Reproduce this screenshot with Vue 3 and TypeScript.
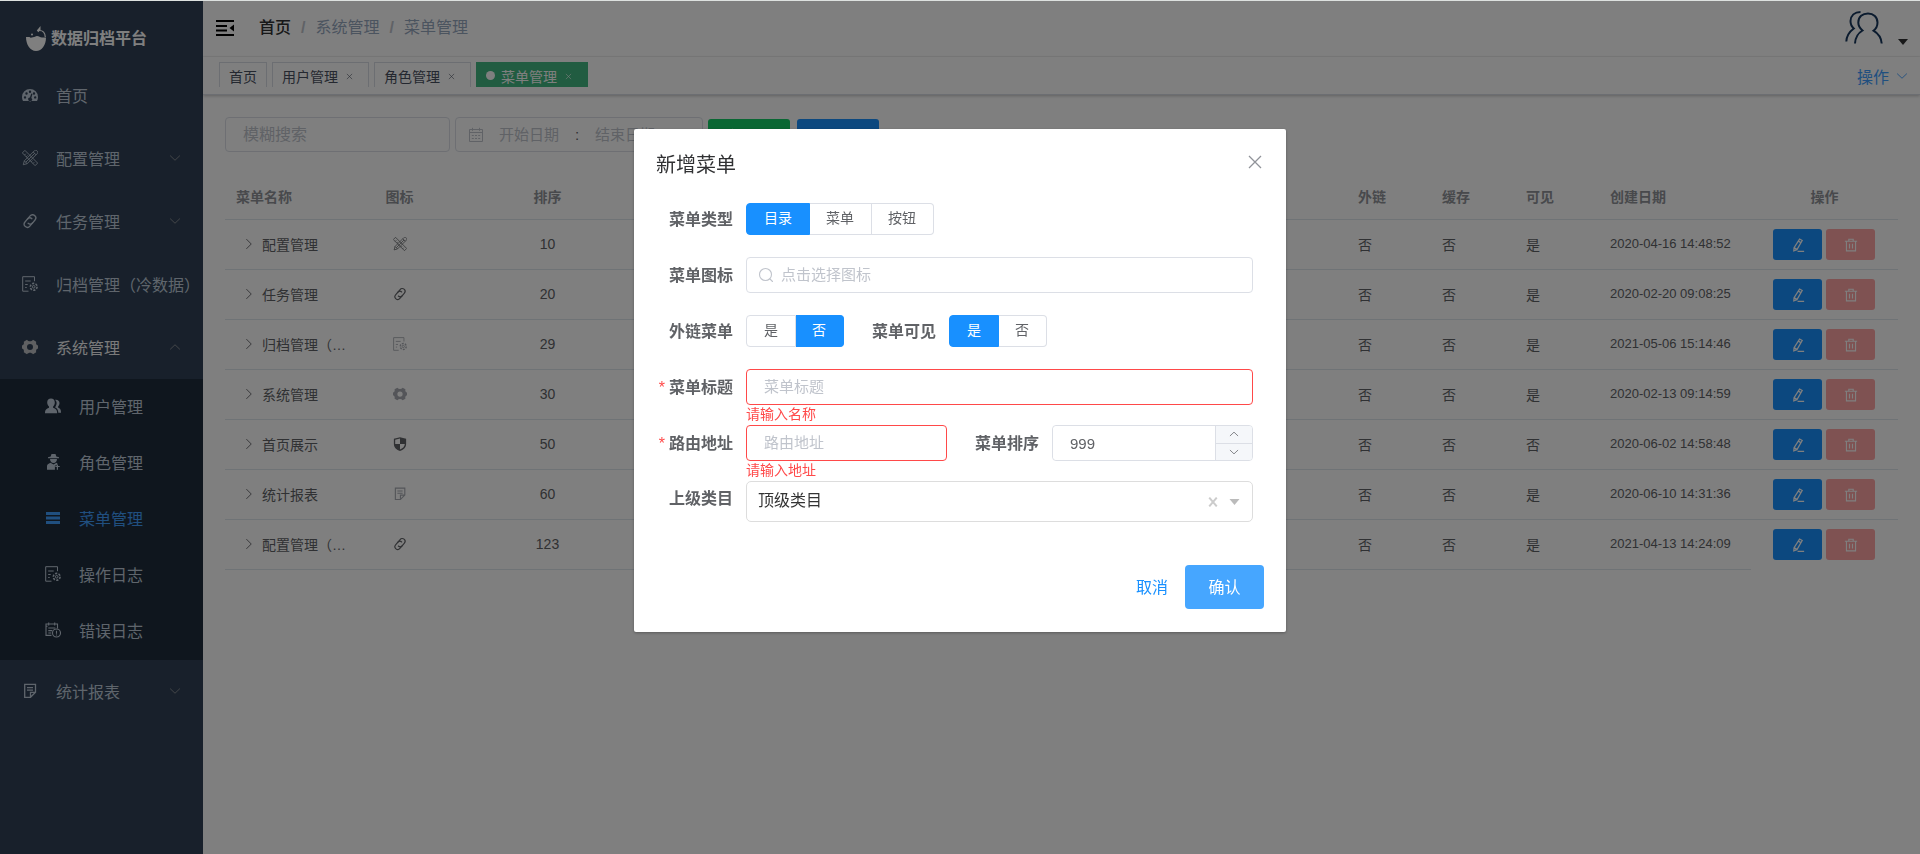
<script setup lang="ts">
import { ref, defineComponent, h } from 'vue'

const paths: Record<string, string> = {
  dashboard:
    '<path fill="currentColor" fill-rule="evenodd" d="M8 2a8 8 0 0 0-8 8c0 1.500.4 2.900 1 4h14c.6-1.100 1-2.500 1-4a8 8 0 0 0-8-8zM3 9.200a1.200 1.200 0 1 1 0 2.400 1.200 1.200 0 0 1 0-2.400zM4.500 5.300a1.200 1.200 0 1 1 0 2.400 1.200 1.200 0 0 1 0-2.400zM8 3.600A1.200 1.200 0 1 1 8 6a1.200 1.200 0 0 1 0-2.400zM9.300 6.500l1.200.4-1.200 4a1.900 1.900 0 1 1-1.400-.4zM12 5.300a1.200 1.200 0 1 1 0 2.400 1.200 1.200 0 0 1 0-2.400zM13.200 9.200a1.200 1.200 0 1 1 0 2.400 1.200 1.200 0 0 1 0-2.400z"/>',
  tools:
    '<g fill="none" stroke="currentColor" stroke-width=".8" stroke-linejoin="round"><path transform="rotate(-45 8 8)" d="M6.200-1h3.600v18H6.200zM6.200 2h1.800M6.200 4.500h1.800M6.200 11.500h1.800M6.200 14h1.800"/><path transform="rotate(45 8 8)" d="M6-.5c0-2 4-2 4 0v14.500l-2 3.500-2-3.500zM6 1.500h4M8 1.500v12.500M6 14h4"/></g>',
  link:
    '<g fill="none" stroke="currentColor" stroke-width="1.300" stroke-linecap="round" transform="rotate(40 8 8)"><path d="M4.800 8.500V4a3.200 3.200 0 0 1 6.400 0v4A3.200 3.200 0 0 1 8 11"/><path d="M11.200 7.500V12a3.200 3.200 0 0 1-6.400 0V8A3.200 3.200 0 0 1 8 5"/></g>',
  docgear:
    '<g fill="none" stroke="currentColor"><path stroke-width="1" d="M6.500 15.200H.7V.7h11.800v4.500M3.200 5h5.500M3.200 8.500h2.500M3.200 11.500h1.500"/><circle cx="11.700" cy="10.800" r="3.400" stroke-width="1.600" stroke-dasharray="2.200 1.300"/><circle cx="11.700" cy="10.800" r="1.300"/></g>',
  gear:
    '<path fill="currentColor" fill-rule="evenodd" d="M5 .8c.8 1 1.800 1.500 3 1.500s2.200-.5 3-1.500l3.200 1.900c-.5 2.100.2 3.200 1.800 3.800v3c-1.600.6-2.300 1.700-1.800 3.800L11 15.200c-.8-1-1.800-1.500-3-1.500s-2.200.5-3 1.500l-3.200-1.900c.5-2.100-.2-3.200-1.800-3.800v-3c1.600-.6 2.300-1.700 1.800-3.800zM8 5a3 3 0 1 0 0 6 3 3 0 0 0 0-6z"/>',
  peoples:
    '<g fill="currentColor"><path d="M6 0.600c2.300 0 3.800 1.600 3.800 3.900 0 1.700-.7 3.100-1.700 4v1.200c2.600.9 4 2.100 4 4.700v.9H0v-.9c0-2.600 1.500-3.800 4-4.700V8.500c-1-.9-1.800-2.300-1.800-4C2.200 2.200 3.700.6 6 .6z"/><path d="M10 1.800c2.600-.4 4.500.9 4.500 3.200 0 1.500-.6 2.600-1.400 3.500v1c2 .8 3 2.200 2.900 5.200h-2.700c0-2.700-1-4.300-3.200-5.300.8-1.200 1.500-2.600 1.500-4.300 0-1.400-.6-2.500-1.600-3.300z"/></g>',
  role:
    '<g fill="currentColor"><path d="M6.500 0h4l.8 2.400 2.700.9v.9H3v-.9l2.700-.9z"/><path d="M5 5h7c0 2.300-1.300 4-3.500 4S5 7.300 5 5z"/><path d="M5.500 8.800l3 1.600 3-1.600 1 .6-1 2.100h-1.600V15.800H2v-3.600c0-1.600 1.300-2.600 3.500-3.400z"/><path d="M11.800 10.500h1.200v1.400h1.700v1.100H13v2.700h-1.200V13h-1.500v-1.100h1.500z"/></g>',
  menu: '<path fill="currentColor" d="M1 2h14v3H1zM1 6.500h14v3H1zM1 11h14v3H1z"/>',
  errorlog:
    '<g fill="none" stroke="currentColor" stroke-width="1.100"><path d="M6.500 13.400H1V2h11.500v4.500M3.700.5v3M9.700.5v3M3.300 6h7M3.300 8.600h4M3.300 11h3M1 4.200h1.500"/><circle cx="11.500" cy="11" r="4"/><path d="M11.500 8.700v3M11.500 12.400v1.100"/></g>',
  report:
    '<g fill="none" stroke="currentColor" stroke-width="1.300"><path d="M8.500 14.300H2.700V1.300h10.800v8zM8.500 14.300v-5h5M5 4.600h6M5 7.200h6"/></g>',
  shield:
    '<path fill="currentColor" fill-rule="evenodd" d="M8 .3l7 1.700v6c0 4.200-3.200 6.700-7 7.900C4.200 14.700 1 12.200 1 8V2zM8 1.800L2.500 3.100V8H8zM8 8v6.300c3-1.100 5.300-3.200 5.500-6.300z"/>',
  calendar:
    '<g fill="none" stroke="currentColor"><path d="M1.500 2.500h13v12h-13zM1.500 5.500h13M4.500.8v3M11.500.8v3M3.800 8.500h2M7 8.500h2M10.200 8.500h2M3.800 11.500h2M7 11.500h2M10.200 11.500h2"/></g>',
  search:
    '<g fill="none" stroke="currentColor" stroke-width="1.100" stroke-linecap="round"><circle cx="7.500" cy="7.500" r="6"/><path d="M12 12l2.500 2.500"/></g>',
  plus: '<path fill="none" stroke="currentColor" stroke-width="1.200" d="M8 1.500v13M1.500 8h13"/>',
  close: '<path fill="none" stroke="currentColor" stroke-width="1.300" d="M2 2l12 12M14 2L2 14"/>',
  clear: '<path fill="none" stroke="currentColor" stroke-width="3.200" d="M2 1l12 14M14 1L2 15"/>',
  down: '<path fill="none" stroke="currentColor" stroke-width="1.200" d="M1.500 4.800L8 11l6.500-6.200"/>',
  up: '<path fill="none" stroke="currentColor" stroke-width="1.200" d="M1.500 11.200L8 5l6.500 6.200"/>',
  right: '<path fill="none" stroke="currentColor" stroke-width="1.200" d="M4.500 1.500L11 8l-6.500 6.500"/>',
  edit:
    '<path fill="none" stroke="currentColor" stroke-width="1.400" d="M9.800 1.200l3 1.600-6 10.500-3.600 1.300.3-3.600zM8.400 3.600l3 1.700M3.500 11l3.200 2M7.500 15.200H15"/>',
  trash:
    '<path fill="none" stroke="currentColor" stroke-width="1.300" d="M1 3.700h14M5.500 3.500V1.400h5v2.100M2.800 3.700v11h10.400v-11M6.300 6.500v5.500M9.700 6.500v5.500"/>',
}

const Icon = defineComponent({
  props: { name: { type: String, required: true } },
  setup: (p) => () => h('svg', { viewBox: '0 0 16 16', 'aria-hidden': 'true', innerHTML: paths[p.name] }),
})

interface NavItem { label: string; icon: string; arrow?: 'down' | 'up'; active?: boolean }
const topNav: NavItem[] = [
  { label: '首页', icon: 'dashboard' },
  { label: '配置管理', icon: 'tools', arrow: 'down' },
  { label: '任务管理', icon: 'link', arrow: 'down' },
  { label: '归档管理（冷数据）', icon: 'docgear' },
  { label: '系统管理', icon: 'gear', arrow: 'up', active: true },
]
const subNav: NavItem[] = [
  { label: '用户管理', icon: 'peoples' },
  { label: '角色管理', icon: 'role' },
  { label: '菜单管理', icon: 'menu', active: true },
  { label: '操作日志', icon: 'docgear' },
  { label: '错误日志', icon: 'errorlog' },
]
const tags = ['用户管理', '角色管理']

interface Row { name: string; icon: string; light: boolean; sort: number; link: string; cache: string; visible: string; date: string }
const row = (name: string, icon: string, light: boolean, sort: number, visible: string, date: string): Row => ({
  name, icon, light, sort, link: '否', cache: '否', visible, date,
})
const rows: Row[] = [
  row('配置管理', 'tools', false, 10, '是', '2020-04-16 14:48:52'),
  row('任务管理', 'link', false, 20, '是', '2020-02-20 09:08:25'),
  row('归档管理（…', 'docgear', true, 29, '是', '2021-05-06 15:14:46'),
  row('系统管理', 'gear', true, 30, '是', '2020-02-13 09:14:59'),
  row('首页展示', 'shield', false, 50, '否', '2020-06-02 14:58:48'),
  row('统计报表', 'report', true, 60, '是', '2020-06-10 14:31:36'),
  row('配置管理（…', 'link', false, 123, '是', '2021-04-13 14:24:09'),
]

const types = ['目录', '菜单', '按钮']
const yesNo = ['是', '否']
const menuType = ref('目录')
const external = ref('否')
const shown = ref('是')
const iconName = ref('')
const title = ref('')
const route = ref('')
const order = ref(999)
const parent = ref('顶级类目')
</script>

<template>
  <div class="app">
    <aside class="sidebar">
      <div class="logo">
        <svg class="logo-mark" viewBox="0 0 20 25" aria-hidden="true">
          <path fill="#fff" d="M0 11h3.500c1 1.500 2.500.3 3.500.3 1.500 0 2.500-1.300 4-1.300 2 0 3 1.500 5 1.500h4c0 7.500-4 13.500-10 13.500S0 18.500 0 11z" />
          <path fill="#fff" d="M14.500 0l-3.700 4.500 1.500 1.800L14.500 4z" />
          <path fill="none" stroke="#fff" stroke-width="1.200" d="M13 4.500c3.500-.2 6 2.300 6.300 6.500" />
          <circle cx="6" cy="8.500" r="1" fill="#fff" />
        </svg>
        <h1>数据归档平台</h1>
      </div>
      <nav>
        <a v-for="n in topNav" :key="n.label" href="#" class="item" :class="{ open: n.active }">
          <Icon class="ico" :name="n.icon" /><span>{{ n.label }}</span>
          <Icon v-if="n.arrow" class="arrow" :name="n.arrow" />
        </a>
        <div class="sub">
          <a v-for="n in subNav" :key="n.label" href="#" class="item" :class="{ current: n.active }">
            <Icon class="ico" :name="n.icon" /><span>{{ n.label }}</span>
          </a>
        </div>
        <a href="#" class="item">
          <Icon class="ico" name="report" /><span>统计报表</span>
          <Icon class="arrow" name="down" />
        </a>
      </nav>
    </aside>

    <div class="page">
      <header class="navbar">
        <button class="burger" aria-label="折叠菜单">
          <svg viewBox="0 0 18 16" aria-hidden="true">
            <path fill="none" stroke="#000" stroke-width="2" d="M0 1h18M0 6h11M0 10.500h11M0 15h18" />
            <path d="M18 4.500v7l-4.500-3.500z" />
          </svg>
        </button>
        <nav class="crumbs">
          <a href="#">首页</a><i>/</i><span>系统管理</span><i>/</i><span>菜单管理</span>
        </nav>
        <button class="user" aria-label="用户">
          <svg class="avatar" viewBox="0 0 38 34" aria-hidden="true">
            <g fill="none" stroke="#16365c" stroke-width="2">
              <path d="M10 32.500c.3-6.500 2.500-10 7.500-13-3-2.500-4.200-5-4.200-8C13.300 5.800 17.500 2.500 23 2.500s9.500 3.500 9.500 9c0 3.300-1.200 6-4 8.200 5 3 7.700 7 8.200 12.800" />
              <path d="M1.300 30.500c.3-5.500 2.700-9.500 7.500-13-2.300-2-3.300-4.500-3.300-7.500C5.800 4.800 9.500 1 15.500 1" />
            </g>
          </svg>
          <svg class="caret" viewBox="0 0 10 6" aria-hidden="true"><path fill="#303133" d="M0 0h10L5 6z" /></svg>
        </button>
      </header>
      <div class="tagsbar">
        <a href="#" class="tag">首页</a>
        <a v-for="t in tags" :key="t" href="#" class="tag">{{ t }}<Icon class="x" name="close" /></a>
        <a href="#" class="tag on"><b class="dot"></b>菜单管理<Icon class="x" name="close" /></a>
        <button class="ops">操作<Icon name="down" /></button>
      </div>

      <main>
        <div class="filters">
          <input class="search" type="text" placeholder="模糊搜索" aria-label="模糊搜索" />
          <div class="range">
            <Icon name="calendar" />
            <input type="text" placeholder="开始日期" aria-label="开始日期" />
            <span>:</span>
            <input type="text" placeholder="结束日期" aria-label="结束日期" />
          </div>
          <button class="btn green"><Icon name="search" />搜索</button>
          <button class="btn blue"><Icon name="plus" />新增</button>
        </div>

        <table>
          <colgroup>
            <col class="c-name" /><col class="c-icon" /><col class="c-sort" /><col />
            <col class="c-flag" /><col class="c-flag" /><col class="c-flag" /><col class="c-date" /><col class="c-act" />
          </colgroup>
          <thead>
            <tr>
              <th>菜单名称</th><th class="mid">图标</th><th class="mid">排序</th><th></th>
              <th>外链</th><th>缓存</th><th>可见</th><th>创建日期</th><th class="mid">操作</th>
            </tr>
          </thead>
          <tbody>
            <tr v-for="r in rows" :key="r.sort">
              <td><div class="name"><Icon name="right" />{{ r.name }}</div></td>
              <td class="mid"><Icon class="cell-ico" :class="{ light: r.light }" :name="r.icon" /></td>
              <td class="mid">{{ r.sort }}</td>
              <td></td>
              <td>{{ r.link }}</td>
              <td>{{ r.cache }}</td>
              <td>{{ r.visible }}</td>
              <td class="date">{{ r.date }}</td>
              <td class="act">
                <div class="acts">
                  <button class="blue" aria-label="编辑"><Icon name="edit" /></button>
                  <button class="red" aria-label="删除"><Icon name="trash" /></button>
                </div>
              </td>
            </tr>
          </tbody>
        </table>
      </main>
    </div>

    <div class="mask">
      <section class="dialog" role="dialog" aria-modal="true" aria-labelledby="dlg-title">
        <header>
          <h2 id="dlg-title">新增菜单</h2>
          <button aria-label="关闭"><Icon name="close" /></button>
        </header>
        <form @submit.prevent>
          <div class="line">
            <span id="l-type" class="label">菜单类型</span>
            <div class="radios" role="radiogroup" aria-labelledby="l-type">
              <label v-for="t in types" :key="t"><input v-model="menuType" type="radio" name="type" :value="t" /><span>{{ t }}</span></label>
            </div>
          </div>
          <div class="line">
            <label class="label" for="f-icon">菜单图标</label>
            <div class="field with-icon">
              <Icon name="search" />
              <input id="f-icon" v-model="iconName" type="text" placeholder="点击选择图标" />
            </div>
          </div>
          <div class="line">
            <span id="l-ext" class="label">外链菜单</span>
            <div class="radios" role="radiogroup" aria-labelledby="l-ext">
              <label v-for="t in yesNo" :key="t"><input v-model="external" type="radio" name="ext" :value="t" /><span>{{ t }}</span></label>
            </div>
            <span id="l-vis" class="label second">菜单可见</span>
            <div class="radios" role="radiogroup" aria-labelledby="l-vis">
              <label v-for="t in yesNo" :key="t"><input v-model="shown" type="radio" name="vis" :value="t" /><span>{{ t }}</span></label>
            </div>
          </div>
          <div class="line">
            <label class="label required" for="f-title">菜单标题</label>
            <div class="field bad">
              <input id="f-title" v-model="title" type="text" placeholder="菜单标题" />
              <p class="error">请输入名称</p>
            </div>
          </div>
          <div class="line">
            <label class="label required" for="f-route">路由地址</label>
            <div class="field bad">
              <input id="f-route" v-model="route" type="text" placeholder="路由地址" />
              <p class="error">请输入地址</p>
            </div>
            <label class="label second" for="f-order">菜单排序</label>
            <div class="number">
              <input id="f-order" v-model.number="order" type="text" inputmode="numeric" />
              <div class="steps">
                <button type="button" aria-label="增加" @click="order++"><Icon name="up" /></button>
                <button type="button" aria-label="减少" @click="order--"><Icon name="down" /></button>
              </div>
            </div>
          </div>
          <div class="line tree">
            <label class="label" for="f-parent">上级类目</label>
            <div class="select">
              <select id="f-parent" v-model="parent"><option>顶级类目</option></select>
              <button type="button" class="clear" aria-label="清除"><Icon name="clear" /></button>
              <svg class="tri" viewBox="0 0 10 6" aria-hidden="true"><path fill="#bbb" d="M0 0h10L5 6z" /></svg>
            </div>
          </div>
          <footer>
            <button type="button" class="cancel">取消</button>
            <button type="submit" class="ok">确认</button>
          </footer>
        </form>
      </section>
    </div>
  </div>
</template>

<style>
html, body { background: #fff; }
</style>

<style scoped>
* { box-sizing: border-box; }
.app {
  display: flex;
  min-height: 100vh;
  border-top: 1px solid #dde1df;
  font-family: "Liberation Sans", "Noto Sans CJK SC", sans-serif;
  font-size: 16px;
  color: #606266;
}
button, input, select { font: inherit; color: inherit; }
button { border: 0; padding: 0; background: none; cursor: pointer; }
a { color: inherit; text-decoration: none; }
svg { display: block; flex: none; width: 16px; height: 16px; }
h1, h2, p { margin: 0; }

.sidebar { width: 203px; flex: none; background: #304156; color: #bfcbd9; }
.logo { display: flex; align-items: center; gap: 5px; height: 63px; padding: 12px 0 0 26px; color: #fff; }
.logo-mark { width: 20px; height: 25px; }
.logo h1 { font-size: 16px; line-height: 24px; }
.item { display: flex; align-items: center; height: 63px; padding: 0 22px 2px; white-space: nowrap; }
.item span { margin-left: 18px; flex: 1; }
.item.open { color: #f4f4f5; }
.item.open .ico { color: #bfc1c4; }
.arrow { width: 12px; height: 12px; color: #909399; }
.sub { background: #1f2d3d; padding-bottom: 1px; }
.sub .item { height: 56px; padding-left: 45px; }
.sub .current { color: #409eff; }

.page { flex: 1; min-width: 0; background: #fff; }
.navbar { display: flex; align-items: center; height: 56px; padding: 0 12px 2px 13px; border-bottom: 1px solid #f4f4f5; }
.burger svg { width: 18px; }
.crumbs { display: flex; align-items: center; margin-left: 25px; line-height: 24px; color: #97a8be; }
.crumbs a { color: #303133; font-weight: 500; }
.crumbs i { margin: 0 10px; font-style: normal; font-weight: 700; color: #c0c4cc; }
.user { display: flex; align-items: flex-end; gap: 15px; margin-left: auto; }
.avatar { width: 38px; height: 34px; }
.caret { width: 10px; height: 6px; }
.tagsbar {
  display: flex;
  align-items: center;
  gap: 5px;
  height: 38px;
  padding: 0 12px 2px 16px;
  border-bottom: 1px solid #d8dce5;
  box-shadow: 0 1px 3px rgba(0, 0, 0, .24);
  font-size: 14px;
}
.tag { display: flex; align-items: center; height: 25px; padding: 1px 9px 0; border: 1px solid #d8dce5; border-bottom: 0; color: #495060; }
.tag .x { width: 7px; height: 7px; margin: 1px 6px 0 8px; }
.tag.on { background: #42b983; border-color: #42b983; color: #fff; }
.dot { width: 9px; height: 9px; margin-right: 6px; border-radius: 50%; background: #fff; }
.ops { display: flex; align-items: center; gap: 7px; margin-left: auto; padding-top: 2px; font-size: 16px; color: #409eff; }
.ops svg { width: 12px; height: 12px; }

main { padding: 22px; }
.filters { display: flex; align-items: center; gap: 5px; }
.filters input::placeholder { color: #c0c4cc; opacity: 1; }
.search { width: 225px; height: 35px; padding: 0 17px; border: 1px solid #dcdfe6; border-radius: 4px; background: #fff; }
.range { display: flex; align-items: center; width: 248px; height: 35px; padding: 0 12px; border: 1px solid #dcdfe6; border-radius: 4px; font-size: 15px; }
.range svg { margin-right: 5px; color: #c0c4cc; }
.range span { width: 16px; text-align: center; }
.range input { width: 80px; padding: 0; border: 0; text-align: center; background: none; }
.btn { display: flex; align-items: center; justify-content: center; gap: 5px; width: 82px; height: 32px; border-radius: 3px; font-size: 14px; color: #fff; }
.btn + .btn { margin-left: 2px; }
.btn svg { width: 14px; height: 14px; }
.green { background: #13ce66; }
.blue { background: #1890ff; }
.red { background: #ffa4a4; }

table { width: 100%; margin-top: 20px; border-collapse: separate; border-spacing: 0; table-layout: fixed; font-size: 14px; text-align: left; }
.c-name { width: 129px; }
.c-icon { width: 91px; }
.c-sort { width: 205px; }
.c-flag { width: 84px; }
.c-date { width: 152px; }
.c-act { width: 147px; }
th, td { height: 50px; padding: 0 0 2px 11px; border-bottom: 1px solid #dfe6ec; white-space: nowrap; }
th { height: 48px; padding-bottom: 0; color: #909399; font-weight: 700; }
.mid { padding-left: 0; text-align: center; }
.date { font-size: 13px; }
.name { display: flex; align-items: center; gap: 7px; padding-left: 7px; }
.name svg { width: 12px; height: 12px; }
.cell-ico { width: 14px; height: 14px; margin: 0 auto; }
.cell-ico.light { color: #a8abb2; }
.act { padding: 0; }
tbody tr:last-child .act { border-bottom-color: transparent; }
.acts { display: flex; gap: 4px; padding-left: 22px; }
.acts button { display: flex; align-items: center; justify-content: center; width: 49px; height: 31px; border-radius: 3px; color: #fff; }
.acts svg { width: 14px; height: 14px; }

.mask { position: fixed; inset: 1px 0 0; background: rgba(0, 0, 0, .5); }
.dialog { width: 652px; margin: 15vh auto 0; padding: 22px 22px 23px; background: #fff; border-radius: 2px; box-shadow: 0 1px 3px rgba(0, 0, 0, .3); }
.dialog header { display: flex; justify-content: space-between; align-items: center; height: 28px; }
.dialog h2 { font-size: 20px; line-height: 28px; font-weight: 400; color: #303133; }
.dialog header button { margin: 0 1px 7px 0; color: #909399; }
form { padding: 22px 11px 0 0; }
.line { display: flex; align-items: center; height: 36px; margin-bottom: 20px; }
.label { width: 90px; padding: 0 13px 2px 0; flex: none; text-align: right; font-weight: 700; color: #606266; white-space: nowrap; }
.label.second { width: 105px; }
.required::before { content: "*"; margin-right: 4px; color: #ff4949; font-weight: 400; }
.radios { display: flex; font-size: 14px; }
.radios label { position: relative; cursor: pointer; }
.radios input { position: absolute; inset: 0; margin: 0; opacity: 0; }
.radios span { display: block; padding: 0 17px 0 16px; height: 32px; line-height: 29px; border: 1px solid #dcdfe6; border-left-width: 0; }
.radios label:first-child span { padding-left: 17px; border-left-width: 1px; border-radius: 4px 0 0 4px; }
.radios label:last-child span { border-radius: 0 4px 4px 0; }
.radios input:checked + span { background: #1890ff; border-color: #1890ff; color: #fff; }
.field { position: relative; flex: 1; min-width: 0; font-size: 15px; }
.field input, .number input { display: block; width: 100%; height: 36px; padding: 0 17px 2px; border: 1px solid #dcdfe6; border-radius: 4px; background: #fff; outline: 0; }
.field input::placeholder { color: #c0c4cc; opacity: 1; }
.with-icon svg { position: absolute; left: 12px; top: 10px; color: #c0c4cc; }
.with-icon input { padding-left: 34px; }
.bad input { border-color: #ff4949; }
.error { position: absolute; left: 0; top: 37px; font-size: 14px; line-height: 16px; color: #ff4949; }
.number { display: flex; width: 201px; height: 36px; border: 1px solid #dcdfe6; border-radius: 4px; overflow: hidden; font-size: 15px; }
.number input { flex: 1; min-width: 0; height: 34px; padding-bottom: 0; border: 0; }
.steps { display: flex; flex-direction: column; width: 37px; border-left: 1px solid #dcdfe6; background: #f5f7fa; }
.steps button { display: flex; flex: 1; align-items: center; justify-content: center; }
.steps button + button { border-top: 1px solid #dcdfe6; }
.steps svg { width: 10px; height: 10px; }
.tree { height: 41px; align-items: flex-start; margin: 0; }
.tree .label { line-height: 36px; }
.select { position: relative; flex: 1; }
.select select { display: block; width: 100%; height: 41px; padding: 0 11px 2px; border: 1px solid #ddd; border-radius: 5px; appearance: none; background: #fff; color: #333; }
.clear { position: absolute; right: 35px; top: 16px; color: #ccc; }
.clear svg { width: 10px; height: 10px; }
.tri { position: absolute; right: 13px; top: 18px; width: 11px; height: 6px; }
.dialog footer { display: flex; justify-content: flex-end; align-items: center; gap: 17px; margin: 43px -11px 0 0; }
.cancel { padding-bottom: 2px; color: #1890ff; }
.ok { width: 79px; height: 44px; padding-bottom: 2px; border-radius: 4px; background: #46a6ff; color: #fff; }
</style>
